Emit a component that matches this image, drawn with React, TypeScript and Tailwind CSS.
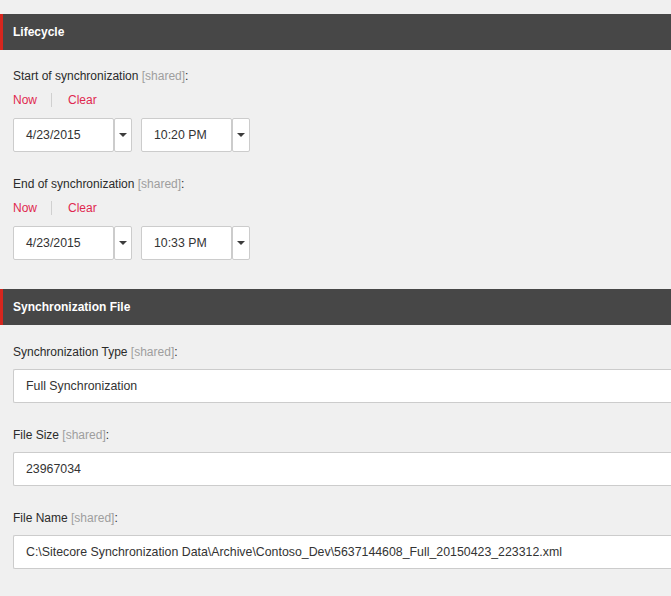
import React from 'react';

const font = { fontFamily: '"Liberation Sans", Arial, sans-serif' };

function SectionHeader({ title }: { title: string }) {
  return (
    <div className="h-9 flex items-center bg-[#474747] border-l-[3px] border-[#d7261e] pl-[10px]">
      <span className="text-white font-bold text-[12px]">{title}</span>
    </div>
  );
}

function Label({ text }: { text: string }) {
  return (
    <div className="text-[12px] leading-4 text-[#2b2b2b]">
      {text} <span className="text-[#9e9e9e]">[shared]</span>:
    </div>
  );
}

function Caret() {
  return (
    <svg width="8" height="4" viewBox="0 0 8 4">
      <path d="M0 0h8L4 4z" fill="#3c3c3c" />
    </svg>
  );
}

function Picker({ value, width }: { value: string; width: string }) {
  return (
    <div className="flex h-[34px]">
      <div className={`${width} bg-white border border-[#cccccc] rounded-[2px] flex items-center pl-[12px] text-[12.3px] text-[#333]`}>
        {value}
      </div>
      <div className="w-[18px] bg-white border border-[#cccccc] rounded-[2px] flex items-center justify-center">
        <Caret />
      </div>
    </div>
  );
}

function DateTimeField({ label, date, time }: { label: string; date: string; time: string }) {
  return (
    <div>
      <Label text={label} />
      <div className="flex items-center mt-[8px] h-4 text-[12px] text-[#e0284f]">
        <span>Now</span>
        <span className="ml-[14px] mr-[16px] w-px h-[14px] bg-[#d0d0d0]" />
        <span>Clear</span>
      </div>
      <div className="flex gap-[9px] mt-[10px]">
        <Picker value={date} width="w-[101px]" />
        <Picker value={time} width="w-[91px]" />
      </div>
    </div>
  );
}

function TextField({ label, value }: { label: string; value: string }) {
  return (
    <div>
      <Label text={label} />
      <div className="mt-[9px] h-[34px] bg-white border border-[#cccccc] border-r-0 rounded-l-[2px] flex items-center pl-[12px] text-[12.35px] text-[#333] whitespace-nowrap">
        {value}
      </div>
    </div>
  );
}

export default function App() {
  return (
    <div className="w-full h-[596px] overflow-hidden bg-[#f0f0f0]" style={font}>
      <div className="w-[700px] pt-[14px]">
        <SectionHeader title="Lifecycle" />
        <div className="pl-[13px] pt-[18px] pb-[29px] flex flex-col gap-[24px]">
          <DateTimeField label="Start of synchronization" date="4/23/2015" time="10:20 PM" />
          <DateTimeField label="End of synchronization" date="4/23/2015" time="10:33 PM" />
        </div>
        <SectionHeader title="Synchronization File" />
        <div className="pl-[13px] pt-[19px] flex flex-col gap-[24px]">
          <TextField label="Synchronization Type" value="Full Synchronization" />
          <TextField label="File Size" value="23967034" />
          <TextField
            label="File Name"
            value="C:\Sitecore Synchronization Data\Archive\Contoso_Dev\5637144608_Full_20150423_223312.xml"
          />
        </div>
      </div>
    </div>
  );
}
